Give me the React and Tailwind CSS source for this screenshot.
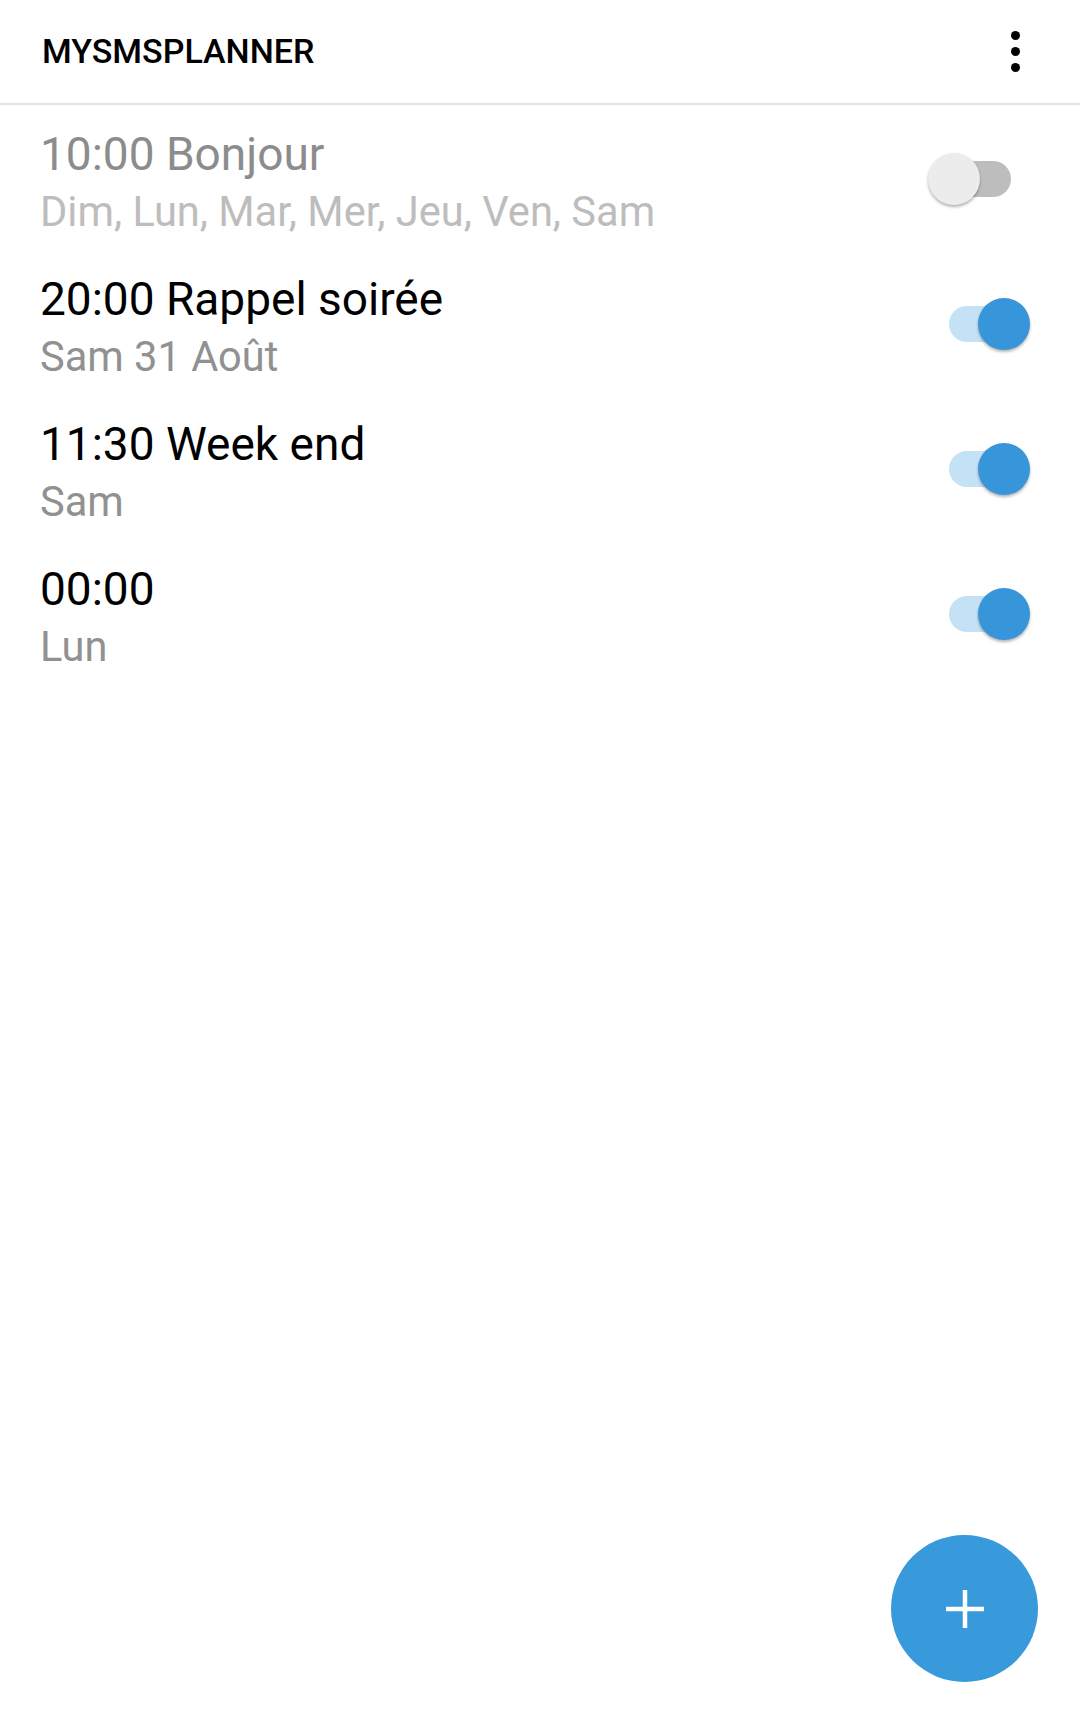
import React, { useState } from 'react'

const schedules = [
  { id: 1, title: '10:00 Bonjour', days: 'Dim, Lun, Mar, Mer, Jeu, Ven, Sam', on: false },
  { id: 2, title: '20:00 Rappel soirée', days: 'Sam 31 Août', on: true },
  { id: 3, title: '11:30 Week end', days: 'Sam', on: true },
  { id: 4, title: '00:00', days: 'Lun', on: true },
]

function Toggle({ checked, onChange }) {
  return (
    <button onClick={onChange} className="relative w-[102px] h-[52px] shrink-0">
      <span
        className={`absolute left-[21px] top-[8px] w-[62px] h-[36px] rounded-full ${
          checked ? 'bg-[#c5e1f6]' : 'bg-[#bdbdbd]'
        }`}
      />
      <span
        className={`absolute top-0 w-[52px] h-[52px] rounded-full shadow-[0_2px_3px_rgba(0,0,0,0.3)] ${
          checked ? 'left-[50px] bg-[#3796d9]' : 'left-0 bg-[#ececec]'
        }`}
      />
    </button>
  )
}

function ScheduleRow({ item, onToggle }) {
  return (
    <div className="flex justify-between h-[145px] pl-[40px] pr-[50px]">
      <div className="pt-[21px]">
        <div className={`text-[46px] leading-[56px] ${item.on ? 'text-black' : 'text-[#8c8c8c]'}`}>
          {item.title}
        </div>
        <div className={`text-[41.6px] leading-[60px] ${item.on ? 'text-[#919191]' : 'text-[#bdbdbd]'}`}>
          {item.days}
        </div>
      </div>
      <div className="self-center mt-[9px]">
        <Toggle checked={item.on} onChange={onToggle} />
      </div>
    </div>
  )
}

export default function App() {
  const [items, setItems] = useState(schedules)

  const toggle = (id) =>
    setItems(items.map((it) => (it.id === id ? { ...it, on: !it.on } : it)))

  return (
    <div className="relative flex flex-col h-[1716px] bg-white font-['Roboto',sans-serif] overflow-hidden">
      {/* Toolbar */}
      <header className="flex items-center justify-between h-[105px] pl-[42px] pr-[60px] border-b-[2px] border-[#e4e4e4]">
        <h1 className="text-[34px] font-medium text-black">MYSMSPLANNER</h1>
        <button className="flex flex-col items-center gap-[7px]">
          <span className="w-[9px] h-[9px] rounded-full bg-black" />
          <span className="w-[9px] h-[9px] rounded-full bg-black" />
          <span className="w-[9px] h-[9px] rounded-full bg-black" />
        </button>
      </header>

      {/* Schedule list */}
      <div className="flex flex-col">
        {items.map((item) => (
          <ScheduleRow key={item.id} item={item} onToggle={() => toggle(item.id)} />
        ))}
      </div>

      {/* Add button */}
      <button className="absolute right-[42px] bottom-[34px] w-[147px] h-[147px] rounded-full bg-[#3899db] flex items-center justify-center">
        <svg width="38" height="38" viewBox="0 0 38 38">
          <path d="M19 0v38M0 19h38" stroke="white" strokeWidth="4.5" />
        </svg>
      </button>
    </div>
  )
}
